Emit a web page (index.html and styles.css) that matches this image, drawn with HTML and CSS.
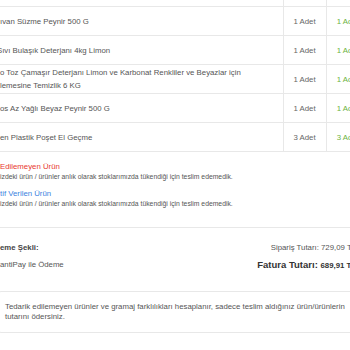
FILE: index.html
```html
<!DOCTYPE html>
<html lang="tr">
<head>
<meta charset="utf-8">
<link rel="stylesheet" href="styles.css">
</head>
<body>
<div class="page">
  <table class="items">
    <colgroup><col class="c-name"><col class="c-qty"><col class="c-del"></colgroup>
    <tr class="head"><td class="name"></td><td class="qty"></td><td class="del"></td></tr>
    <tr><td class="name">ıvan Süzme Peynir 500 G</td><td class="qty">1 Adet</td><td class="del">1 Adet</td></tr>
    <tr><td class="name"><span class="cut">Sıvı Bulaşık Deterjanı 4kg Limon</span></td><td class="qty">1 Adet</td><td class="del">1 Adet</td></tr>
    <tr><td class="name">o Toz Çamaşır Deterjanı Limon ve Karbonat Renkliler ve Beyazlar için<br>lemesine Temizlik 6 KG</td><td class="qty">1 Adet</td><td class="del">1 Adet</td></tr>
    <tr><td class="name">os Az Yağlı Beyaz Peynir 500 G</td><td class="qty">1 Adet</td><td class="del">1 Adet</td></tr>
    <tr><td class="name">en Plastik Poşet El Geçme</td><td class="qty">3 Adet</td><td class="del">3 Adet</td></tr>
  </table>

  <div class="notes">
    <div class="note">
      <div class="note-title red">Edilemeyen Ürün</div>
      <div class="note-text">izdeki ürün / ürünler anlık olarak stoklarımızda tükendiği için teslim edemedik.</div>
    </div>
    <div class="note">
      <div class="note-title blue">tif Verilen Ürün</div>
      <div class="note-text">izdeki ürün / ürünler anlık olarak stoklarımızda tükendiği için teslim edemedik.</div>
    </div>
  </div>

  <div class="summary">
    <div class="pay">
      <div class="pay-label">eme Şekli:</div>
      <div>antiPay ile Ödeme</div>
    </div>
    <div class="totals">
      <div>Sipariş Tutarı: 729,09 TL</div>
      <div class="invoice">Fatura Tutarı: <span class="invoice-num">689,91 TL</span></div>
    </div>
  </div>

  <div class="info">Tedarik edilemeyen ürünler ve gramaj farklılıkları hesaplanır, sadece teslim aldığınız ürün/ürünlerin tutarını ödersiniz.</div>
</div>
</body>
</html>
```

FILE: styles.css
```css
html, body {
  margin: 0;
  padding: 0;
  background: #fff;
  overflow: hidden;
}

body {
  font-family: "Liberation Sans", Arial, sans-serif;
  color: #555;
}

.page {
  width: 369px;
  font-size: 7.8px;
}

.items {
  width: 369px;
  border-collapse: collapse;
  table-layout: fixed;
}

.c-name { width: 283px; }
.c-qty { width: 43px; }
.c-del { width: 43px; }

.items td {
  height: 28px;
  padding: 0;
  line-height: 13px;
  vertical-align: middle;
  border-bottom: 1px solid #e8e8e8;
  white-space: nowrap;
}

.items .head td {
  height: 6px;
}

.items .qty,
.items .del {
  text-align: center;
  border-left: 1px solid #e8e8e8;
}

.items .qty {
  color: #666;
}

.items .del {
  color: #6cb33e;
}

.cut {
  margin-left: -3px;
}

.notes {
  padding: 9px 0 18px;
  border-bottom: 1px solid #e8e8e8;
}

.note + .note {
  margin-top: 6px;
}

.note-title {
  line-height: 11px;
}

.red { color: #e8392f; }
.blue { color: #3b82e0; }

.note-text {
  font-size: 6.8px;
  line-height: 10px;
  color: #555;
}

.summary {
  display: flex;
  justify-content: space-between;
  padding: 14px 13px 0 0;
}

.pay,
.totals {
  display: flex;
  flex-direction: column;
  gap: 5px;
  line-height: 12px;
}

.totals {
  align-items: flex-end;
}

.pay-label {
  font-weight: bold;
  color: #444;
}

.invoice {
  font-size: 9.5px;
  font-weight: bold;
  color: #333;
}

.invoice-num {
  font-size: 7.8px;
}

.info {
  margin: 19px 0 0 -3px;
  padding: 10px 7px;
  border: 1px solid #e8e8e8;
  border-radius: 4px;
  line-height: 10px;
  color: #555;
}
```
